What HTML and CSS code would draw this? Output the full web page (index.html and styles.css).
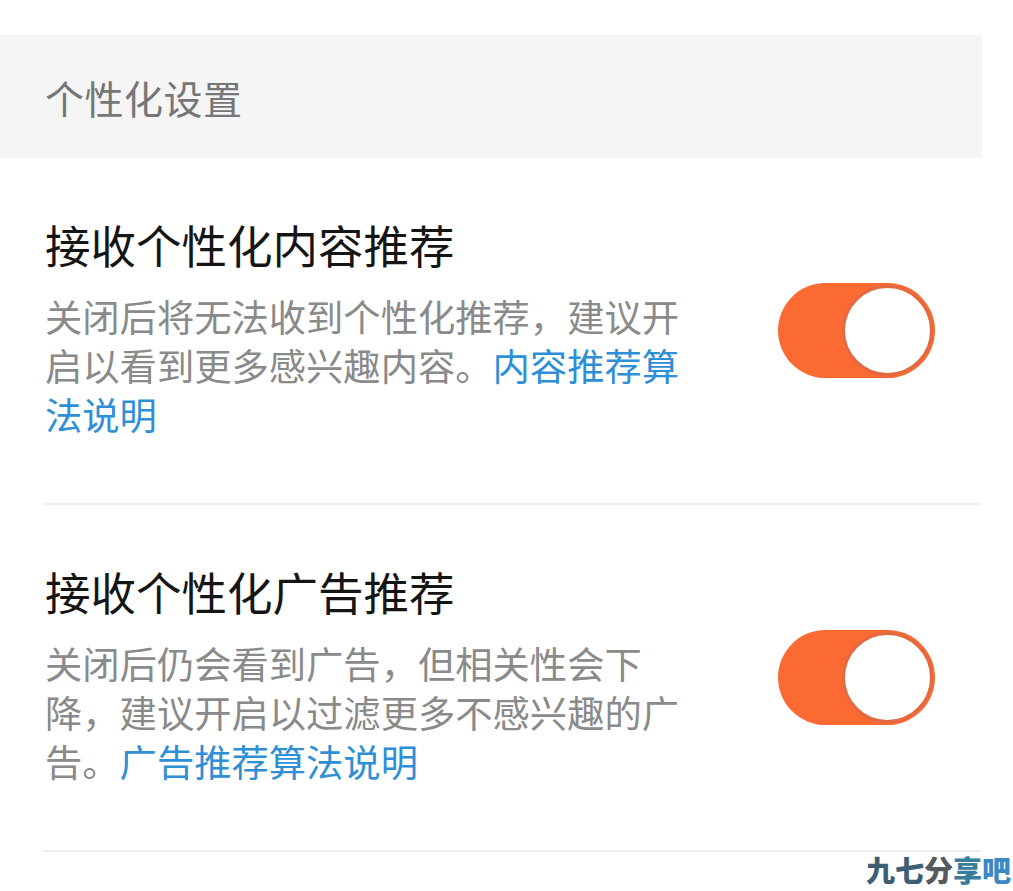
FILE: index.html
```html
<!DOCTYPE html>
<html>
<head>
    <meta charset="utf-8">
    <link rel="stylesheet" href="styles.css">
    <title>个性化设置</title>
</head>
<body>
    <div class="page">
        <div class="section-head">个性化设置</div>

        <div class="list">
            <div class="item">
                <div class="item-text">
                    <div class="item-title">接收个性化内容推荐</div>
                    <div class="item-desc">关闭后将无法收到个性化推荐，建议开启以看到更多感兴趣内容。<a class="link">内容推荐算法说明</a></div>
                </div>
                <span class="switch on"><span class="knob"></span></span>
            </div>

            <div class="item">
                <div class="item-text">
                    <div class="item-title">接收个性化广告推荐</div>
                    <div class="item-desc">关闭后仍会看到广告，但相关性会下降，建议开启以过滤更多不感兴趣的广告。<a class="link">广告推荐算法说明</a></div>
                </div>
                <span class="switch on"><span class="knob"></span></span>
            </div>
        </div>
    </div>

    <div class="watermark"><span class="wm1">九七</span><span class="wm2">分</span><span class="wm3">享</span><span class="wm4">吧</span></div>
</body>
</html>
```

FILE: styles.css
```css
html, body{
    margin: 0;
    padding: 0;
    background: #ffffff;
}

body{
    font-family: "Noto Sans CJK SC", "Noto Sans", sans-serif;
    position: relative;
    min-height: 891px;
}

.page{
    width: 982px;
    padding-top: 35px;
}

.section-head{
    background-color: #f5f5f5;
    height: 123px;
    padding-left: 45px;
    display: flex;
    align-items: center;
    font-size: 39px;
    color: #767676;
    letter-spacing: 0.5px;
}

.list{
    padding-left: 42px;
}

.item{
    display: flex;
    align-items: center;
    justify-content: space-between;
    padding: 58px 47px 64px 3px;
    border-bottom: 2px solid #efefef;
}

.item-text{
    width: 645px;
}

.item-title{
    font-size: 45.5px;
    line-height: 56px;
    font-weight: 400;
    color: #151515;
    margin-bottom: 20px;
}

.item-desc{
    font-size: 37.3px;
    line-height: 49px;
    color: #8a8a8a;
}

a.link{
    color: #2f8fd6;
    text-decoration: none;
    cursor: pointer;
}

.switch{
    width: 157px;
    height: 95px;
    border-radius: 48px;
    background-color: #d8d8d8;
    display: flex;
    align-items: center;
    padding: 0 2px;
    box-sizing: border-box;
    margin-top: 5px;
}

.switch.on{
    background-color: #fc6a34;
    justify-content: flex-end;
}

.knob{
    width: 91px;
    height: 91px;
    border-radius: 50%;
    background-color: #ffffff;
    border: 3px solid #e3693e;
    box-sizing: border-box;
}

.watermark{
    position: absolute;
    right: 2px;
    top: 851px;
    font-size: 29px;
    font-weight: 900;
    line-height: 36px;
    letter-spacing: 0;
}

.wm1{ color: #3e5e72; }
.wm2{ color: #555a5e; }
.wm3{ color: #3a7c9c; }
.wm4{ color: #3a88c4; }
```
